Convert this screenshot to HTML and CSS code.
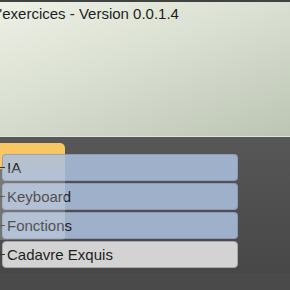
FILE: index.html
```html
<!DOCTYPE html>
<html lang="fr">
<head>
    <meta charset="UTF-8">
    <title>Exercices</title>
    <link rel="stylesheet" href="styles.css">
</head>
<body>
    <div class="topbar"></div>
    <div class="panel">
        <p class="title">d'exercices - Version 0.0.1.4</p>
    </div>
    <div class="menu">
        <div class="tab"></div>
        <div class="item">IA</div>
        <div class="item">Keyboard</div>
        <div class="item">Fonctions</div>
        <div class="item plain">Cadavre Exquis</div>
        <div class="strip"></div>
    </div>
</body>
</html>
```

FILE: styles.css
```css
body {
    margin: 0;
    font-family: "Liberation Sans", Arial, sans-serif;
    background: #4a4a4a;
}
.topbar {
    height: 2px;
    background: #424242;
}
.panel {
    height: 134px;
    background: linear-gradient(160deg, #eef1e6 0%, #d4dbcc 55%, #bcc4b4 100%);
    border-bottom: 1px solid #e0e4da;
    overflow: hidden;
}
.title {
    margin: 0;
    padding-top: 3px;
    font-size: 15px;
    line-height: 17px;
    color: #1e1e1e;
    text-indent: -9px;
    white-space: nowrap;
}
.menu {
    position: relative;
    height: 136px;
    padding: 17px 0 0 2px;
    box-sizing: border-box;
    overflow: hidden;
    background: linear-gradient(to bottom, #575757, #474747);
}
.tab {
    position: absolute;
    left: 0;
    top: 6px;
    width: 65px;
    height: 26px;
    background: #f8c662;
    border-top-right-radius: 5px;
}
.item {
    position: relative;
    box-sizing: border-box;
    width: 236px;
    height: 27px;
    margin-bottom: 2px;
    padding: 4px 4px;
    font-size: 15px;
    line-height: 17px;
    color: #1e1e1e;
    background: rgba(172, 192, 222, 0.86);
    border: 1px solid rgba(120, 135, 160, 0.5);
    border-radius: 4px;
}
.item::before {
    content: "";
    position: absolute;
    left: -3px;
    top: 12px;
    width: 5px;
    height: 1px;
    background: #333;
}
.plain {
    background: #d3d3d3;
    border-color: #a8a8a8;
}
.strip {
    position: absolute;
    left: 0;
    top: 32px;
    width: 65px;
    height: 71px;
    background: rgba(255, 255, 255, 0.22);
    border-bottom-right-radius: 4px;
    pointer-events: none;
}
```
